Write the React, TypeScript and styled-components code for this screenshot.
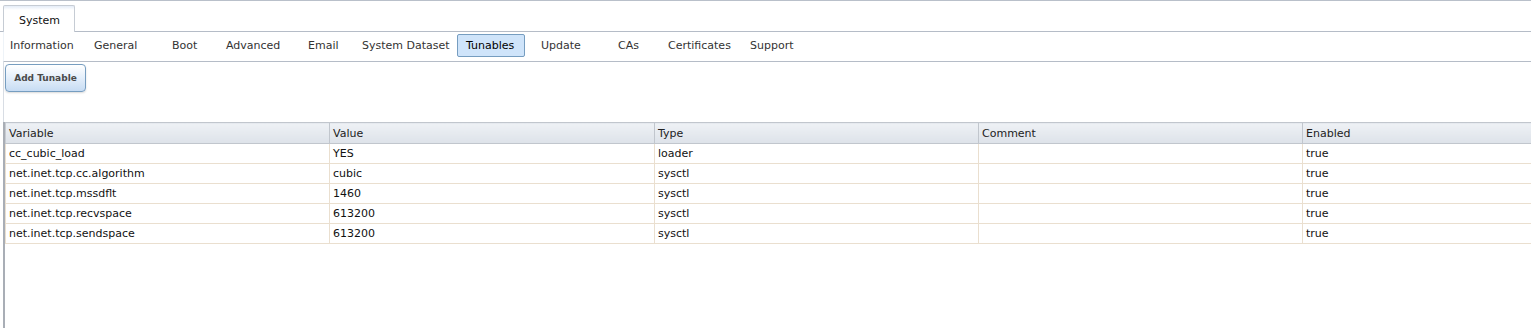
import styled, { createGlobalStyle } from 'styled-components'

const GlobalStyle = createGlobalStyle`
	html, body {
		margin: 0;
		padding: 0;
		background: #ffffff;
		overflow: hidden;
	}
	body {
		font-family: 'DejaVu Sans', Verdana, sans-serif;
		font-size: 11px;
		color: #222222;
	}
`

const Page = styled.div`
	width: 1531px;
	height: 328px;
	border-top: 1px solid #b9c0ca;
	box-sizing: border-box;
	overflow: hidden;
	display: flex;
	flex-direction: column;
`

const TabStrip = styled.div`
	display: flex;
	align-items: flex-end;
	height: 30px;
	padding-left: 3px;
	border-bottom: 1px solid #b5bcc7;
`

const MainTab = styled.div`
	width: 72px;
	height: 27px;
	box-sizing: border-box;
	border: 1px solid #c6ccd4;
	border-bottom: none;
	border-radius: 2px 2px 0 0;
	background: linear-gradient(to bottom, #e4ecf7 0, #ffffff 4px, #ffffff 100%);
	margin-bottom: -1px;
	padding-top: 8px;
	padding-left: 15px;
	font-size: 11px;
	color: #111111;
`

const SubTabBar = styled.div`
	display: flex;
	align-items: center;
	height: 30px;
	box-sizing: border-box;
	padding-bottom: 2px;
	margin-left: 3px;
	border-left: 1px solid #eef3f8;
	border-bottom: 1px solid #b5bcc7;
`

const SubTab = styled.div<{ $w: number; $active?: boolean }>`
	width: ${(p) => p.$w}px;
	flex: none;
	height: 23px;
	box-sizing: border-box;
	display: flex;
	align-items: center;
	padding-left: ${(p) => (p.$active ? 8 : 5)}px;
	margin-right: ${(p) => (p.$active ? 10 : 0)}px;
	border: 1px solid ${(p) => (p.$active ? '#769dc0' : 'transparent')};
	border-radius: 2px;
	background: ${(p) => (p.$active ? '#cfe4fa' : 'transparent')};
	color: ${(p) => (p.$active ? '#000000' : '#333333')};
	white-space: nowrap;
`

const Toolbar = styled.div`
	height: 60px;
	margin-left: 3px;
	border-left: 1px solid #d8dde4;
	padding: 2px 0 0 1px;
	box-sizing: border-box;
`

const AddButton = styled.button`
	width: 81px;
	height: 28px;
	border: 1px solid #769dc0;
	border-radius: 4px;
	background: linear-gradient(to bottom, #ffffff 0%, #e6f0fb 45%, #c7dcf3 100%);
	box-shadow: 0 1px 2px rgba(0, 0, 0, 0.15);
	font-family: 'DejaVu Sans', Verdana, sans-serif;
	font-size: 9px;
	font-weight: bold;
	color: #4a4a4a;
	padding: 0;
	cursor: pointer;
`

const GridWrap = styled.div`
	flex: 1;
	margin-left: 3px;
	border-left: 2px solid #a9aeb6;
	overflow: hidden;
`

const Grid = styled.table`
	width: 1622px;
	border-collapse: collapse;
	table-layout: fixed;
`

const Col = styled.col<{ $w: number }>`
	width: ${(p) => p.$w}px;
`

const HeadCell = styled.th`
	height: 20px;
	padding: 0 0 0 3px;
	text-align: left;
	font-weight: normal;
	color: #222222;
	background: linear-gradient(to bottom, #eef1f5 0%, #dde2e9 100%);
	border: 1px solid #c1c6cd;
	border-left-color: #c8ccd2;
	white-space: nowrap;
`

const Cell = styled.td`
	height: 19px;
	padding: 0 0 0 3px;
	border: 1px solid #eadfcf;
	color: #111111;
	white-space: nowrap;
`

const tabs = [
	{ label: 'Information', w: 84 },
	{ label: 'General', w: 78 },
	{ label: 'Boot', w: 54 },
	{ label: 'Advanced', w: 82 },
	{ label: 'Email', w: 54 },
	{ label: 'System Dataset', w: 101 },
	{ label: 'Tunables', w: 68, active: true },
	{ label: 'Update', w: 77 },
	{ label: 'CAs', w: 50 },
	{ label: 'Certificates', w: 82 },
	{ label: 'Support', w: 80 },
]

const columns = [
	{ label: 'Variable', w: 324 },
	{ label: 'Value', w: 325 },
	{ label: 'Type', w: 324 },
	{ label: 'Comment', w: 324 },
	{ label: 'Enabled', w: 325 },
]

const rows = [
	['cc_cubic_load', 'YES', 'loader', '', 'true'],
	['net.inet.tcp.cc.algorithm', 'cubic', 'sysctl', '', 'true'],
	['net.inet.tcp.mssdflt', '1460', 'sysctl', '', 'true'],
	['net.inet.tcp.recvspace', '613200', 'sysctl', '', 'true'],
	['net.inet.tcp.sendspace', '613200', 'sysctl', '', 'true'],
]

export default function App() {
	return (
		<>
			<GlobalStyle />
			<Page>
				<TabStrip>
					<MainTab>System</MainTab>
				</TabStrip>
				<SubTabBar>
					{tabs.map((t) => (
						<SubTab key={t.label} $w={t.w} $active={t.active}>
							{t.label}
						</SubTab>
					))}
				</SubTabBar>
				<Toolbar>
					<AddButton>Add Tunable</AddButton>
				</Toolbar>
				<GridWrap>
					<Grid>
						<colgroup>
							{columns.map((c) => (
								<Col key={c.label} $w={c.w} />
							))}
						</colgroup>
						<thead>
							<tr>
								{columns.map((c) => (
									<HeadCell key={c.label}>{c.label}</HeadCell>
								))}
							</tr>
						</thead>
						<tbody>
							{rows.map((r) => (
								<tr key={r[0]}>
									{r.map((v, i) => (
										<Cell key={i}>{v}</Cell>
									))}
								</tr>
							))}
						</tbody>
					</Grid>
				</GridWrap>
			</Page>
		</>
	)
}
